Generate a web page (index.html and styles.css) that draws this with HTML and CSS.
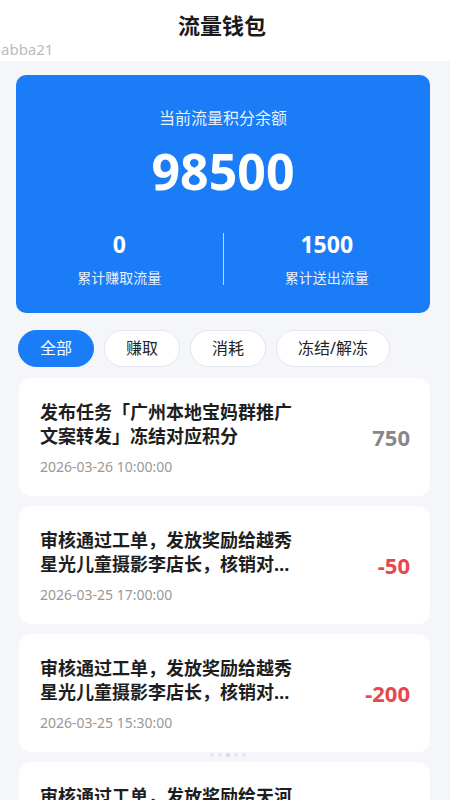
FILE: index.html
```html
<!DOCTYPE html>
<html lang="zh">
<head>
<meta charset="utf-8">
<link rel="stylesheet" href="styles.css">
</head>
<body>
<div class="header">
  <div class="title">流量钱包</div>
  <div class="user">abba21</div>
</div>
<div class="content">
  <div class="balance">
    <div class="b-label">当前流量积分余额</div>
    <div class="b-num">98500</div>
    <div class="stats">
      <div class="stat">
        <div class="s-num">0</div>
        <div class="s-label">累计赚取流量</div>
      </div>
      <div class="divider"></div>
      <div class="stat">
        <div class="s-num">1500</div>
        <div class="s-label">累计送出流量</div>
      </div>
    </div>
  </div>
  <div class="tabs">
    <div class="tab active">全部</div>
    <div class="tab">赚取</div>
    <div class="tab">消耗</div>
    <div class="tab">冻结/解冻</div>
  </div>
  <div class="list">
    <div class="item">
      <div class="info">
        <div class="i-title">发布任务「广州本地宝妈群推广文案转发」冻结对应积分</div>
        <div class="i-date">2026-03-26 10:00:00</div>
      </div>
      <div class="amt gray">750</div>
    </div>
    <div class="item">
      <div class="info">
        <div class="i-title">审核通过工单，发放奖励给越秀星光儿童摄影李店长，核销对应积分</div>
        <div class="i-date">2026-03-25 17:00:00</div>
      </div>
      <div class="amt red">-50</div>
    </div>
    <div class="item">
      <div class="info">
        <div class="i-title">审核通过工单，发放奖励给越秀星光儿童摄影李店长，核销对应积分</div>
        <div class="i-date">2026-03-25 15:30:00</div>
      </div>
      <div class="amt red">-200</div>
    </div>
    <div class="item">
      <div class="info">
        <div class="i-title">审核通过工单，发放奖励给天河某门店店长，核销对应积分</div>
        <div class="i-date">2026-03-25 12:00:00</div>
      </div>
      <div class="amt red">-100</div>
    </div>
  </div>
</div>
<div class="dots"><span></span><span></span><span class="on"></span><span></span><span></span></div>
</body>
</html>
```
FILE: styles.css
```css
* { box-sizing: border-box; margin: 0; padding: 0; }
html, body { height: 100%; overflow: hidden; }
body {
  background: #f4f6fa;
  font-family: "Noto Sans", "Noto Sans CJK SC", sans-serif;
  color: #222;
  width: 450px;
}
.header {
  background: #fff;
  padding-top: 10px;
  height: 61px;
}
.title {
  text-align: center;
  font-size: 22px;
  font-weight: 700;
  line-height: 30px;
  color: #1a1a1a;
  padding-right: 6px;
}
.user {
  font-size: 15px;
  line-height: 18px;
  color: #bbbbbb;
  padding-left: 1px;
}
.content {
  padding: 14px 20px 0 16px;
}
.balance {
  background: #1a7cf6;
  border-radius: 10px;
  height: 238px;
  color: #fff;
  text-align: center;
  padding-top: 31px;
}
.b-label {
  font-size: 16px;
  line-height: 24px;
  color: rgba(255,255,255,0.92);
}
.b-num {
  font-size: 50px;
  font-weight: 700;
  line-height: 60px;
  margin-top: 11px;
}
.stats {
  display: flex;
  align-items: center;
  margin-top: 29px;
}
.stat { flex: 1; }
.divider {
  width: 1px;
  height: 52px;
  background: rgba(255,255,255,0.7);
}
.s-num {
  font-size: 23px;
  font-weight: 700;
  line-height: 28px;
}
.s-label {
  font-size: 14px;
  line-height: 20px;
  margin-top: 10px;
  color: rgba(255,255,255,0.92);
}
.tabs {
  display: flex;
  gap: 10px;
  margin-top: 17px;
  padding-left: 2px;
}
.tab {
  height: 37px;
  line-height: 35px;
  padding: 0 21px;
  border: 1px solid #e3e6ec;
  border-radius: 19px;
  background: #fff;
  font-size: 16px;
  color: #222;
}
.tab.active {
  background: #1a7cf6;
  border-color: #1a7cf6;
  color: #fff;
}
.list {
  margin-top: 11px;
  display: flex;
  flex-direction: column;
  gap: 10px;
  padding-left: 3px;
}
.item {
  background: #fff;
  border-radius: 12px;
  padding: 22px 20px 19px 21px;
  display: flex;
  align-items: center;
  justify-content: space-between;
  min-height: 118px;
}
.info { width: 262px; }
.i-title {
  font-size: 18px;
  font-weight: 700;
  line-height: 24px;
  color: #1e1e1e;
  display: -webkit-box;
  -webkit-line-clamp: 2;
  -webkit-box-orient: vertical;
  overflow: hidden;
}
.i-date {
  font-size: 14px;
  line-height: 20px;
  color: #999;
  margin-top: 9px;
}
.amt {
  font-size: 22px;
  font-weight: 700;
  padding-bottom: 4px;
}
.amt.gray { color: #888; }
.amt.red { color: #e5484d; }
.dots {
  position: absolute;
  left: 210px;
  top: 753px;
  display: flex;
  gap: 4px;
}
.dots span {
  width: 4px;
  height: 4px;
  border-radius: 50%;
  background: #e4e7ee;
}
.dots span.on { background: #d6dae3; }
```
